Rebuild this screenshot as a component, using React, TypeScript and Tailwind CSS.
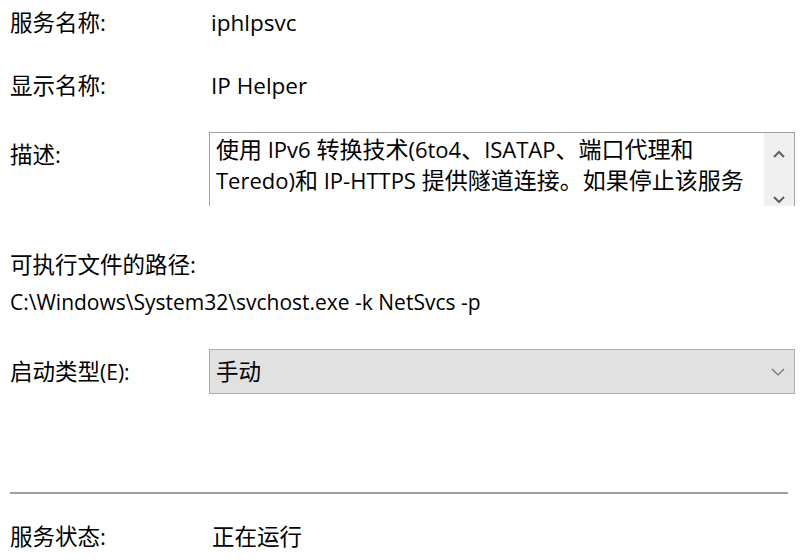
import React from "react";

const font = { fontFamily: '"Open Sans", "Noto Sans CJK SC", sans-serif' };

function Z({ children }: { children: React.ReactNode }) {
  return <span className="text-[22.5px]">{children}</span>;
}

export default function App() {
  return (
    <div
      className="w-[800px] h-[560px] bg-white text-black text-[21px] leading-[30px] pl-[10px] overflow-hidden"
      style={font}
    >
      <div className="flex h-[46px] items-center">
        <div className="w-[199px]"><Z>服务名称:</Z></div>
        <div className="pl-[2px] text-[22.5px]">iphlpsvc</div>
      </div>
      <div className="flex h-[50px] items-center mt-[15px]">
        <div className="w-[199px]"><Z>显示名称:</Z></div>
        <div className="pl-[2px] text-[22.5px]">IP Helper</div>
      </div>
      <div className="flex mt-[21px]">
        <div className="w-[199px] pt-[8px]"><Z>描述:</Z></div>
        <div className="w-[586px] h-[74px] border-t border-l border-r border-[#a0a0a0] flex overflow-hidden">
          <div className="flex-1 pl-[6px] pt-[1px] text-[22px] leading-[31px] overflow-hidden whitespace-nowrap">
            <div>
              <span className="text-[23px]">使用</span> IPv6 <span className="text-[23px]">转换技术</span>(6to4<span className="text-[23px]">、</span>ISATAP<span className="text-[23px]">、端口代理和</span>
            </div>
            <div>
              Teredo)<span className="text-[23px]">和</span> IP-HTTPS <span className="text-[23px]">提供隧道连接。如果停止该服务</span>
            </div>
          </div>
          <div className="w-[30px] bg-[#f0f0f0] flex flex-col items-center justify-between pt-[17px] pb-[2px]">
            <svg width="12" height="8" viewBox="0 0 12 8">
              <path d="M1 7 L6 2 L11 7" fill="none" stroke="#606060" strokeWidth="2" />
            </svg>
            <svg width="12" height="8" viewBox="0 0 12 8">
              <path d="M1 1 L6 6 L11 1" fill="none" stroke="#606060" strokeWidth="2" />
            </svg>
          </div>
        </div>
      </div>
      <div className="h-[30px] mt-[44px]"><Z>可执行文件的路径:</Z></div>
      <div className="h-[30px] mt-[7px]">C:\Windows\System32\svchost.exe -k NetSvcs -p</div>
      <div className="flex items-center mt-[32px]">
        <div className="w-[199px]"><Z>启动类型</Z>(E):</div>
        <div className="w-[586px] h-[45px] bg-[#e1e1e1] border border-[#adadad] flex items-center justify-between pl-[6px] pr-[9px]">
          <Z>手动</Z>
          <svg width="14" height="8" viewBox="0 0 14 8">
            <path d="M1 1 L7 7 L13 1" fill="none" stroke="#707070" strokeWidth="1.2" />
          </svg>
        </div>
      </div>
      <div className="mt-[98px] h-[2px] w-[778px] bg-[#a0a0a0]" />
      <div className="flex mt-[28px] h-[30px]">
        <div className="w-[199px]"><Z>服务状态:</Z></div>
        <div className="pl-[3px]"><Z>正在运行</Z></div>
      </div>
    </div>
  );
}
